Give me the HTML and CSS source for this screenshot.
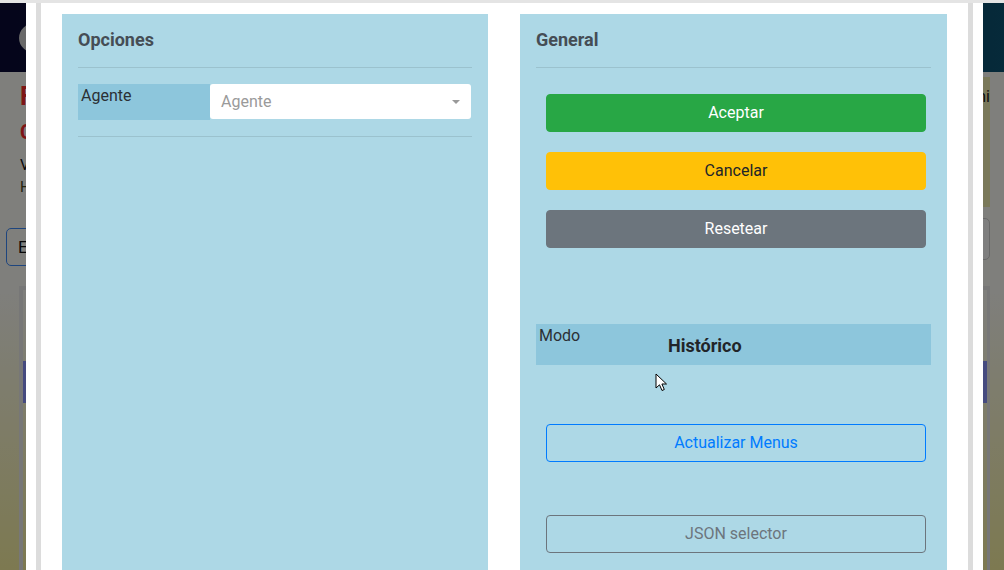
FILE: index.html
```html
<!DOCTYPE html>
<html lang="es">
<head>
<meta charset="utf-8">
<title>Opciones</title>
<link rel="stylesheet" href="styles.css">
</head>
<body>
<div class="viewport">
  <div class="page">
    <header class="navbar"><div class="logo"></div></header>
    <main class="content">
      <div class="top-row">
        <div class="intro">
          <h1 class="title">Fin</h1>
          <h2 class="subtitle">Con</h2>
          <p class="line">Ver</p>
          <p class="line hint">Hoy</p>
        </div>
        <div class="notice">ni</div>
      </div>
      <div class="filters">
        <div class="filter left">Es</div>
        <div class="filter right"><span class="caret-dark"></span></div>
      </div>
      <div class="card"><div class="card-band"></div></div>
    </main>
  </div>
  <div class="backdrop"></div>
  <div class="modal">
    <div class="modal-inner">
      <section class="panel">
        <h5 class="panel-title">Opciones</h5>
        <hr class="rule">
        <div class="field-row">
          <div class="field-label">Agente</div>
          <div class="select">
            <span class="placeholder">Agente</span>
            <span class="caret"></span>
          </div>
        </div>
        <hr class="rule">
      </section>
      <section class="panel">
        <h5 class="panel-title">General</h5>
        <hr class="rule">
        <div class="actions">
          <button class="btn btn-success">Aceptar</button>
          <button class="btn btn-warning">Cancelar</button>
          <button class="btn btn-secondary">Resetear</button>
        </div>
        <div class="mode-row">
          <div class="mode-label">Modo</div>
          <div class="mode-value">Histórico</div>
        </div>
        <div class="actions lower">
          <button class="btn btn-outline-primary">Actualizar Menus</button>
          <button class="btn btn-outline-secondary">JSON selector</button>
        </div>
      </section>
    </div>
  </div>
  <svg class="cursor" width="14" height="20" viewBox="0 0 14 20">
    <path d="M1 1 L1 15 L4.5 11.8 L7 17.5 L9.3 16.5 L6.9 11 L11.5 11 Z" fill="#fff" stroke="#000" stroke-width="1" stroke-linejoin="round"/>
  </svg>
</div>
</body>
</html>
```
FILE: styles.css
```css
* { box-sizing: border-box; }

html, body {
  margin: 0;
  padding: 0;
  height: 100%;
}

body {
  padding-top: 3px;
  background: #e4e4e4;
  font-family: Roboto, "Liberation Sans", Arial, sans-serif;
  overflow: hidden;
}

.viewport {
  position: relative;
  height: 567px;
  overflow: hidden;
}

/* ---------- background page ---------- */
.page {
  height: 100%;
  background: linear-gradient(to bottom, #fefef8 0, #fefef8 290px, #faf3a2 567px);
}

.navbar {
  height: 69px;
  background: linear-gradient(90deg, #0a0a36 0%, #0b3050 60%, #0c5474 100%);
  padding: 20px 0 0 19px;
}

.logo {
  width: 32px;
  height: 30px;
  border-radius: 50%;
  background: #d2d2d2;
}

.content {
  padding: 0 14px 0 6px;
}

.top-row {
  display: flex;
  justify-content: space-between;
}

.intro {
  padding-left: 14px;
}

.title {
  margin: 10px 0 0;
  font-size: 25px;
  line-height: 30px;
  font-weight: 700;
  color: #ff2a2a;
}

.subtitle {
  margin: 8px 0 0;
  font-size: 20px;
  line-height: 24px;
  font-weight: 700;
  color: #ff2a2a;
}

.line {
  margin: 12px 0 0;
  font-size: 15px;
  line-height: 18px;
  color: #111;
}

.line.hint {
  margin-top: 4px;
  color: #4c4c20;
}

.notice {
  margin-top: 5px;
  width: 160px;
  height: 130px;
  padding: 10px 0 0;
  text-align: right;
  font-size: 16px;
  color: #222;
  background: #f4f2b4;
}

.filters {
  display: flex;
  justify-content: space-between;
  margin-top: 21px;
}

.filter {
  height: 38px;
  border-radius: 5px;
  font-size: 17px;
  line-height: 36px;
  color: #111;
}

.filter.left {
  width: 200px;
  padding-left: 11px;
  border: 1px solid #3d8bfd;
}

.filter.right {
  width: 40px;
  height: 42px;
  border: 1px solid #d0d0d0;
  margin-top: -10px;
  padding: 8px 0 0 8px;
  background: #fefefe;
}

.caret-dark {
  display: inline-block;
  width: 0;
  height: 0;
  border-left: 5px solid transparent;
  border-right: 5px solid transparent;
  border-top: 6px solid #555;
  vertical-align: middle;
}

.card {
  margin: 20px 0 0 13px;
  height: 300px;
  border: 4px solid #eeeeee;
  border-right-width: 3px;
  padding-top: 71px;
}

.card-band {
  height: 42px;
  background: #8a94ff;
}

.backdrop {
  position: absolute;
  inset: 0;
  background: rgba(0, 0, 0, 0.5);
}

/* ---------- modal ---------- */
.modal {
  position: absolute;
  left: 26px;
  top: 0;
  width: 957px;
  height: 600px;
  background: #fff;
  padding: 0 10px;
}

.modal-inner {
  height: 100%;
  border-left: 5px solid #dcdcdc;
  border-right: 5px solid #dcdcdc;
  padding: 11px 21px 0;
  display: grid;
  grid-template-columns: 426px 427px;
  column-gap: 32px;
}

.panel {
  background: #add8e6;
  padding: 15px 16px 0;
}

.panel-title {
  margin: 0;
  font-size: 18px;
  line-height: 22px;
  font-weight: 700;
  color: #454d55;
}

.rule {
  margin: 16px 0;
  border: 0;
  border-top: 1px solid rgba(0, 0, 0, 0.1);
}

.field-row {
  display: flex;
  height: 36px;
}

.field-label {
  width: 132px;
  background: #8dc6dc;
  padding: 2px 0 0 3px;
  font-size: 16px;
  line-height: 19px;
  color: #2b3035;
}

.select {
  width: 261px;
  height: 35px;
  background: #fff;
  border-radius: 3px;
  display: flex;
  align-items: center;
  justify-content: space-between;
  padding: 0 11px 0 11px;
}

.placeholder {
  font-size: 16px;
  color: #9a9a9a;
}

.caret {
  width: 0;
  height: 0;
  border-left: 4px solid transparent;
  border-right: 4px solid transparent;
  border-top: 4px solid #999;
}

.actions {
  display: flex;
  flex-direction: column;
  gap: 20px;
  padding: 10px 5px 0 10px;
}

.actions.lower {
  padding-top: 59px;
  gap: 53px;
}

.btn {
  display: block;
  width: 100%;
  height: 38px;
  padding: 6px 12px;
  font-family: Roboto, "Liberation Sans", Arial, sans-serif;
  font-size: 16px;
  line-height: 24px;
  text-align: center;
  border: 1px solid transparent;
  border-radius: 4px;
  background: transparent;
}

.btn-success { background: #28a745; border-color: #28a745; color: #fff; }
.btn-warning { background: #ffc107; border-color: #ffc107; color: #212529; }
.btn-secondary { background: #6c757d; border-color: #6c757d; color: #fff; }
.btn-outline-primary { border-color: #007bff; color: #007bff; }
.btn-outline-secondary { border-color: #6c757d; color: #6c757d; }

.mode-row {
  display: flex;
  height: 41px;
  margin-top: 76px;
  background: #8dc6dc;
}

.mode-label {
  width: 132px;
  padding: 2px 0 0 3px;
  font-size: 16px;
  line-height: 19px;
  color: #2b3035;
}

.mode-value {
  padding-top: 11px;
  font-size: 18px;
  line-height: 22px;
  font-weight: 700;
  color: #212529;
}

.cursor {
  position: absolute;
  left: 655px;
  top: 370px;
}
```
